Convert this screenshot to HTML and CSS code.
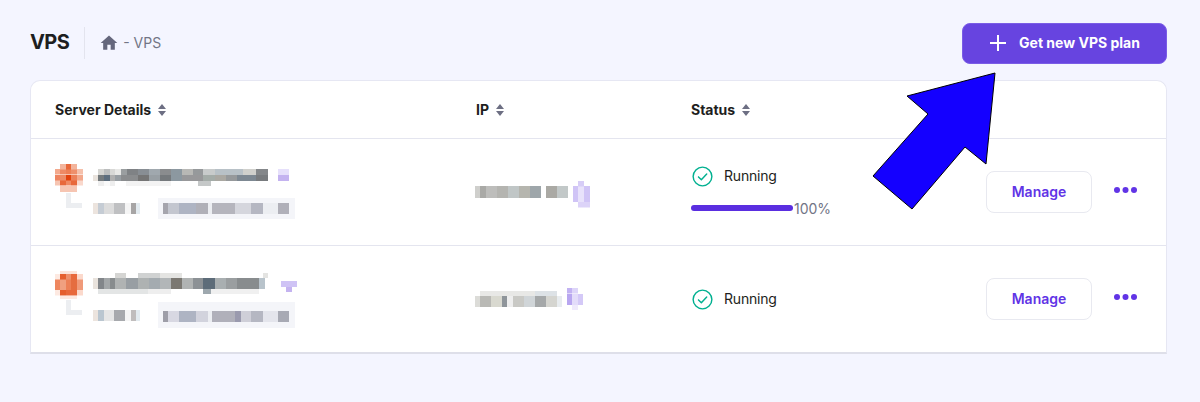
FILE: index.html
```html
<!DOCTYPE html>
<html lang="en">
<head>
<meta charset="utf-8">
<title>VPS</title>
<link rel="stylesheet" href="styles.css">
</head>
<body>
<main class="page">
  <header class="topbar">
    <h1 class="title">VPS</h1>
    <nav class="crumbs">
      <svg class="home" viewBox="0 0 24 24"><path d="M10 20v-6h4v6h5v-8h3L12 3 2 12h3v8z"/></svg>
      <span>- VPS</span>
    </nav>
    <button class="cta">
      <svg class="plus" viewBox="0 0 18 18"><path d="M9 1v16M1 9h16"/></svg>
      <span>Get new VPS plan</span>
    </button>
  </header>

  <section class="card">
    <div class="row head">
      <div class="th">Server Details <svg class="sort" viewBox="0 0 8 12"><path d="M4 0l4 5H0zM4 12L0 7h8z"/></svg></div>
      <div class="th">IP <svg class="sort" viewBox="0 0 8 12"><path d="M4 0l4 5H0zM4 12L0 7h8z"/></svg></div>
      <div class="th">Status <svg class="sort" viewBox="0 0 8 12"><path d="M4 0l4 5H0zM4 12L0 7h8z"/></svg></div>
    </div>

    <div class="row server">
      <div class="details">
        <div class="avatar avatar-a"></div>
        <div class="info">
          <div class="line-top"><div class="name name-a"></div><div class="tag tag-a"></div></div>
          <div class="line-sub"><div class="elbow"></div><div class="size size-a"></div><div class="expiry expiry-a"></div></div>
        </div>
      </div>
      <div class="ip"><div class="addr addr-a"></div><div class="copy copy-a"></div></div>
      <div class="status">
        <div class="state">
          <svg class="check" viewBox="0 0 22 22"><circle cx="11" cy="11" r="9.8"/><path d="M6.8 11.4l3 3 5.6-6"/></svg>
          <span>Running</span>
        </div>
        <div class="progress"><div class="bar"></div><span>100%</span></div>
      </div>
      <button class="manage"><span>Manage</span></button>
      <svg class="more" viewBox="0 0 23 6"><circle cx="3" cy="3" r="3"/><circle cx="11.5" cy="3" r="3"/><circle cx="20" cy="3" r="3"/></svg>
    </div>

    <div class="row server">
      <div class="details">
        <div class="avatar avatar-b"></div>
        <div class="info">
          <div class="line-top"><div class="name name-b"></div><div class="tag tag-b"></div></div>
          <div class="line-sub"><div class="elbow"></div><div class="size size-b"></div><div class="expiry expiry-b"></div></div>
        </div>
      </div>
      <div class="ip"><div class="addr addr-b"></div><div class="copy copy-b"></div></div>
      <div class="status">
        <div class="state">
          <svg class="check" viewBox="0 0 22 22"><circle cx="11" cy="11" r="9.8"/><path d="M6.8 11.4l3 3 5.6-6"/></svg>
          <span>Running</span>
        </div>
      </div>
      <button class="manage"><span>Manage</span></button>
      <svg class="more" viewBox="0 0 23 6"><circle cx="3" cy="3" r="3"/><circle cx="11.5" cy="3" r="3"/><circle cx="20" cy="3" r="3"/></svg>
    </div>
  </section>
</main>

<svg class="arrow" viewBox="0 0 1200 402"><polygon points="995,73 907,96 928,114 873,176 912,209 965,147 986,164"/></svg>
</body>
</html>
```
FILE: styles.css
```css
* { box-sizing: border-box; }
html, body { margin: 0; height: 402px; overflow: hidden; }
body { background: #f4f5ff; font-family: Inter, "Noto Sans", sans-serif; color: #1d1e20; position: relative; }
.page { padding: 22px 33px 0 30px; }

.topbar { display: flex; align-items: center; height: 42px; margin-bottom: 16px; }
.title { margin: 0; font-size: 20px; font-weight: 700; line-height: 30px; padding-right: 15px; border-right: 1px solid #e3e4ee; height: 32px; letter-spacing: -.6px; }
.crumbs { display: flex; align-items: center; gap: 4px; margin-left: 14px; color: #727586; font-size: 14px; }
.crumbs span { padding-bottom: 2px; }
.home { width: 20px; height: 20px; fill: #65677c; }
.cta { margin-left: auto; width: 205px; height: 41px; display: flex; align-items: center; justify-content: center; gap: 12px; background: #6744e0; color: #fff; border: 1px solid #7a5ce6; border-radius: 8px; font: 700 14px Inter, sans-serif; padding: 0; }
.cta span { padding-bottom: 2px; }
.plus { width: 18px; height: 18px; fill: none; stroke: #fff; stroke-width: 2; }

.card { background: #fff; border: 1px solid #e6e7f3; border-bottom: 2px solid #dedfe9; border-radius: 10px 10px 0 0; height: 274px; }
.row { display: grid; grid-template-columns: 421px 215px 295px 106px 1fr; align-items: center; padding-left: 24px; }
.head { height: 58px; border-bottom: 1px solid #e4e5ef; }
.server { height: 106px; }
.server + .server { border-top: 1px solid #e4e5ef; height: 107px; }
.th { display: flex; align-items: center; gap: 7px; font-size: 14px; font-weight: 700; }
.sort { width: 8px; height: 12px; fill: #6d6f83; }

.details { display: flex; gap: 10px; padding-top: 3px; }
.avatar { width: 28px; height: 28px; margin-top: -5px; flex: none; filter: blur(.6px); }
.avatar-a { background:
  linear-gradient(90deg, transparent 0 5.5px, #f3b49c 0 11px, #e8683a 0 16.5px, #f3b49c 0 22px, transparent 0) 0 0/100% 5.5px no-repeat,
  linear-gradient(90deg, #f3a98d 0 5.5px, #ee8a64 0 11px, #ec8057 0 16.5px, #ee8f6b 0 22px, #f5c0ab 0) 0 5.5px/100% 5.5px no-repeat,
  linear-gradient(90deg, #ee8460 0 5.5px, #ed8b66 0 11px, #e2420d 0 16.5px, #ec8059 0 22px, #f2a88c 0) 0 11px/100% 5.5px no-repeat,
  linear-gradient(90deg, #f6c5b2 0 5.5px, #e8683a 0 11px, #ee8a64 0 16.5px, #e8683a 0 22px, #f9d8cc 0) 0 16.5px/100% 5.5px no-repeat,
  linear-gradient(90deg, transparent 0 5.5px, #f6c5b2 0 22px, transparent 0) 0 22px/100% 6px no-repeat; }
.avatar-b { background:
  linear-gradient(90deg, transparent 0 5.5px, #fbe3d9 0 22px, transparent 0) 0 0/100% 3px no-repeat,
  linear-gradient(90deg, #fde9e1 0 5.5px, #e55f2e 0 11px, #ee8f6b 0 16.5px, #e8693c 0 22px, #fbd9cc 0) 0 3px/100% 5.5px no-repeat,
  linear-gradient(90deg, #ee875f 0 5.5px, #f0a080 0 11px, #ec8057 0 16.5px, #e56d40 0 22px, #f09a79 0) 0 8.5px/100% 11px no-repeat,
  linear-gradient(90deg, #fde9e1 0 5.5px, #e55f2e 0 11px, #e8693c 0 22px, #fbd9cc 0) 0 19.5px/100% 5.5px no-repeat,
  linear-gradient(90deg, transparent 0 5.5px, #fde9e1 0 22px, transparent 0) 0 25px/100% 3px no-repeat; }

.info { display: flex; flex-direction: column; gap: 11px; }
.line-top { display: flex; align-items: center; gap: 10px; height: 18px; }
.line-sub { display: flex; align-items: center; height: 21px; position: relative; }

.name { height: 18px; filter: blur(.7px); }
.name-a { width: 175px; background:
  linear-gradient(90deg, #fff 0 5px, #d5d5d2 0 11px, #bcbebe 0 17px, #d8d8d6 0 22px, #e8e8e6 0 28px, #9a9ea0 0 34px, #7f8285 0 45px, #888e94 0 56px, #a0a8ae 0 67px, #8a8c8e 0 78px, #8c98a0 0 89px, #b8b8b5 0 100px, #96999b 0 110px, #c8cbcb 0 122px, #b8c1c7 0 150px, #d0d0cc 0 163px, #84878a 0 175px) 0 0/100% 6px no-repeat,
  linear-gradient(90deg, #e9e3dd 0 5px, #757b7e 0 11px, #5d6e7e 0 17px, #b0b0b0 0 22px, #989ea3 0 28px, #8a8c8e 0 45px, #757575 0 56px, #989fa4 0 67px, #75797c 0 78px, #8c98a0 0 89px, #98989a 0 110px, #a4aca8 0 122px, #aaa8a2 0 133px, #96999b 0 144px, #7d8892 0 163px, #787b7e 0 175px) 0 6px/100% 6px no-repeat,
  linear-gradient(90deg, #fff 0 5px, #eee 0 11px, #fafafa 0 17px, #eee 0 22px, #fff 0 33px, #f3f3f3 0 78px, #fff 0 105px, #c5c8c8 0 118px, #fff 0) 0 12px/100% 5px no-repeat; }
.name-b { width: 178px; height: 21px; margin-top: -3px; background:
  linear-gradient(90deg, #fff 0 22px, #d5d5d3 0 33px, #fff 0 45px, #d0d2d2 0 67px, #e4e4e2 0 89px, #fff 0 170px, #e4e4e2 0 175px, #fff 0) 0 0/100% 5px no-repeat,
  linear-gradient(90deg, #e9e3dd 0 5px, #82868a 0 11px, #a3a7a9 0 17px, #888c8e 0 22px, #b0b3b3 0 33px, #989ea3 0 45px, #aeb2b2 0 56px, #a4abb0 0 67px, #b2b6b8 0 78px, #7b7872 0 89px, #b0b3b3 0 100px, #8c9195 0 110px, #5d6c79 0 122px, #a9afb1 0 133px, #9a9ea0 0 144px, #888c8e 0 166px, #b8c3cb 0 172px, #fff 0) 0 5px/100% 11px no-repeat,
  linear-gradient(90deg, #fff 0 5px, #e3e5e5 0 55px, #eee 0 78px, #fff 0 110px, #9ea8ae 0 118px, #f0f0f0 0 166px, #fff 0) 0 16px/100% 5px no-repeat; }

.tag { flex: none; filter: blur(.3px); }
.tag-a { width: 11px; height: 12px; margin-bottom: 5px; background: linear-gradient(#e6e0fb 0 6px, #c4b3f0 0); }
.tag-b { width: 16px; height: 11px; margin-top: 4px; background: linear-gradient(#cfc3f5 0 6px, transparent 0), linear-gradient(90deg, transparent 5px, #c4b3f0 0 11px, transparent 0); }

.elbow { position: absolute; left: -27px; top: -5px; width: 16px; height: 15px; border-left: 5px solid #eceef1; border-bottom: 5px solid #eceef1; }
.size { width: 47px; height: 11px; flex: none; filter: blur(.6px); }
.size-a { background: linear-gradient(90deg, #ece4de 0 5px, #c5ccd4 0 11px, #dcdcdc 0 21px, #bfc0c2 0 32px, #f5f5f5 0 38px, #a7a5a5 0 43px, #e3ebf0 0); }
.size-b { background: linear-gradient(90deg, #ece4de 0 5px, #bac6d0 0 11px, #e6e6e6 0 21px, #a7a9ad 0 32px, #f5f5f5 0 38px, #c0bdbd 0 43px, #e3ebf0 0); }
.expiry { margin-left: 18px; width: 137px; height: 21px; flex: none; filter: blur(.6px); }
.expiry-a { background:
  linear-gradient(90deg, #a5a5ad 0 5px, #c3c6cf 0 16px, #aeb4c3 0 33px, #b0b0b8 0 45px, #eceef2 0 49px, #b5b5bd 0 72px, #d5d6dd 0 88px, #b5b7c2 0 100px, #eceef2 0 115px, #b0b0b9 0 126px, #f4f5f9 0) 5px 5px/100% 11px no-repeat, #f4f5f9; }
.expiry-b { height: 26px; background:
  linear-gradient(90deg, #9e9ea8 0 5px, #d8d8e2 0 16px, #aeb4c3 0 33px, #d2d3dd 0 45px, #eceef2 0 49px, #b0b0ba 0 72px, #9a9aae 0 78px, #cfcfd8 0 88px, #b5b7c2 0 100px, #e4e5ec 0 115px, #a8aab4 0 126px, #f4f5f9 0) 5px 9px/100% 11px no-repeat, #f4f5f9; }

.ip { display: flex; align-items: center; gap: 5px; margin-left: -1px; }
.addr { height: 12px; filter: blur(.6px); }
.addr-a { width: 93px; background: linear-gradient(90deg, #cfcfcc 0 5px, #a9a9a6 0 11px, #bdbdbb 0 22px, #b4b4b0 0 33px, #c0c6c6 0 44px, #b5b5ae 0 55px, #9ea6aa 0 66px, #fff 0 71px, #aaa9a4 0 82px, #c2c8c8 0); }
.addr-b { width: 87px; height: 16px; background:
  linear-gradient(90deg, #fff 0 5px, #e8e8e6 0 60px, #dde2e6 0 82px, #fff 0) 0 0/100% 5px no-repeat,
  linear-gradient(90deg, #dcdcd8 0 5px, #b9b9b5 0 16px, #d9d9d0 0 27px, #8f959a 0 32px, #eee 0 38px, #c9c9c5 0 49px, #d0d5d8 0 60px, #a5a8a9 0 71px, #d5d5d0 0 82px, #e8ecef 0) 0 5px/100% 11px no-repeat; }
.copy { width: 17px; height: 27px; flex: none; margin-top: 4px; filter: blur(.5px); }
.copy-a { background:
  linear-gradient(90deg, transparent 5.5px, #d7cdf7 0 11px, transparent 0) 0 0/100% 5.5px no-repeat,
  linear-gradient(90deg, #d0c4f6 0 5.5px, #e8e2fb 0 11px, #d0c4f6 0) 0 5.5px/100% 16px no-repeat,
  linear-gradient(90deg, transparent 5.5px, #dcd3f8 0) 0 21.5px/100% 5.5px no-repeat; }
.copy-b { width: 16px; height: 22px; margin-top: 0; background:
  linear-gradient(90deg, #c2b2f2 0 5.5px, #ddd5f9 0 11px, transparent 0) 0 0/100% 5.5px no-repeat,
  linear-gradient(90deg, #b8a6f0 0 5.5px, #e3dcfa 0 11px, #d4c9f7 0) 0 5.5px/100% 11px no-repeat,
  linear-gradient(90deg, transparent 5.5px, #efeafc 0 11px, transparent 0) 0 16.5px/100% 5.5px no-repeat; }

.status { display: flex; flex-direction: column; gap: 11px; }
.state { display: flex; align-items: center; gap: 11px; font-size: 14px; letter-spacing: -.2px; height: 21px; }
.state span { padding-bottom: 2px; }
.check { width: 21px; height: 21px; fill: none; stroke: #00b090; stroke-width: 1.5; stroke-linecap: round; stroke-linejoin: round; margin-left: 1px; }
.progress { display: flex; align-items: center; font-size: 14px; color: #727586; height: 20px; }
.bar { width: 102px; height: 6px; border-radius: 3px; background: #5a2ee0; margin-right: 1px; }

.manage { width: 106px; height: 42px; background: #fff; border: 1px solid #e8e9f0; border-radius: 8px; color: #6134e6; font: 600 14px Inter, sans-serif; padding: 0 0 2px; }
.more { width: 23px; height: 6px; fill: #6134e6; margin-left: 22px; margin-top: -4px; }

.arrow { position: absolute; left: 0; top: 0; width: 1200px; height: 402px; pointer-events: none; }
.arrow polygon { fill: #1400ff; stroke: #000; stroke-width: 1; }
```
